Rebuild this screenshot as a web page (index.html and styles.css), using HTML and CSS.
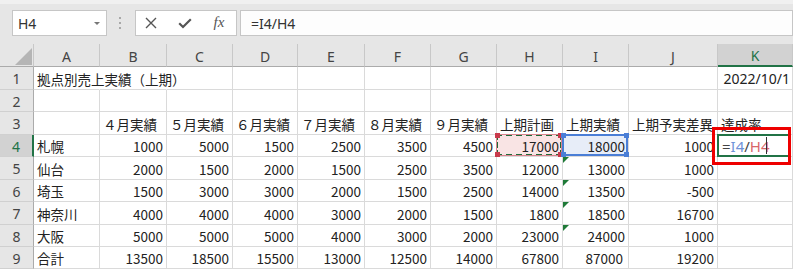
FILE: index.html
```html
<!DOCTYPE html>
<html lang="ja">
<head>
<meta charset="utf-8">
<link rel="stylesheet" href="styles.css">
</head>
<body>
<div class="app">
  <div class="toolbar">
    <div class="namebox"><span>H4</span><span class="arrow"></span></div>
    <div class="grip"><i></i><i></i><i></i></div>
    <div class="fxbtns">
      <span class="btn"><svg width="12" height="12" viewBox="0 0 12 12"><path d="M1 1L11 11M11 1L1 11" stroke="#555" stroke-width="1.4" fill="none"/></svg></span>
      <span class="btn"><svg width="14" height="11" viewBox="0 0 14 11"><path d="M1.2 5.2L5 9L12.8 1.2" stroke="#555" stroke-width="2.2" fill="none"/></svg></span>
      <span class="btn fx">fx</span>
    </div>
    <div class="formula">=I4/H4</div>
  </div>
  <div class="sheet">
    <div class="corner"><span class="tri"></span></div>
    <div class="ch">A</div><div class="ch">B</div><div class="ch">C</div><div class="ch">D</div><div class="ch">E</div><div class="ch">F</div><div class="ch">G</div><div class="ch">H</div><div class="ch">I</div><div class="ch">J</div><div class="ch sel">K</div>

    <div class="rh">1</div>
    <div class="c nb">拠点別売上実績（上期）</div><div class="c nb"></div><div class="c"></div><div class="c"></div><div class="c"></div><div class="c"></div><div class="c"></div><div class="c"></div><div class="c"></div><div class="c"></div><div class="c n date">2022/10/1</div>

    <div class="rh">2</div>
    <div class="c"></div><div class="c"></div><div class="c"></div><div class="c"></div><div class="c"></div><div class="c"></div><div class="c"></div><div class="c"></div><div class="c"></div><div class="c"></div><div class="c"></div>

    <div class="rh">3</div>
    <div class="c"></div><div class="c">４月実績</div><div class="c">５月実績</div><div class="c">６月実績</div><div class="c">７月実績</div><div class="c">８月実績</div><div class="c">９月実績</div><div class="c">上期計画</div><div class="c">上期実績</div><div class="c">上期予実差異</div><div class="c">達成率</div>

    <div class="rh sel">4</div>
    <div class="c">札幌</div><div class="c n">1000</div><div class="c n">5000</div><div class="c n">1500</div><div class="c n">2500</div><div class="c n">3500</div><div class="c n">4500</div><div class="c n refh"><span class="mark-h"><i class="q tl"></i><i class="q tr"></i><i class="q bl"></i><i class="q br"></i></span>17000</div><div class="c n refi"><span class="mark-i"><i class="q tl"></i><i class="q tr"></i><i class="q bl"></i><i class="q br"></i></span>18000</div><div class="c n">1000</div><div class="c active"><span class="fml"><span>=</span><span class="ci">I4</span><span>/</span><span class="chh">H4</span></span><span class="caret"></span></div>

    <div class="rh">5</div>
    <div class="c">仙台</div><div class="c n">2000</div><div class="c n">1500</div><div class="c n">2000</div><div class="c n">1500</div><div class="c n">2500</div><div class="c n">3500</div><div class="c n">12000</div><div class="c n err">13000</div><div class="c n">1000</div><div class="c"></div>

    <div class="rh">6</div>
    <div class="c">埼玉</div><div class="c n">1500</div><div class="c n">3000</div><div class="c n">3000</div><div class="c n">2000</div><div class="c n">1500</div><div class="c n">2500</div><div class="c n">14000</div><div class="c n err">13500</div><div class="c n">-500</div><div class="c"></div>

    <div class="rh">7</div>
    <div class="c">神奈川</div><div class="c n">4000</div><div class="c n">4000</div><div class="c n">4000</div><div class="c n">3000</div><div class="c n">2000</div><div class="c n">1500</div><div class="c n">1800</div><div class="c n err">18500</div><div class="c n">16700</div><div class="c"></div>

    <div class="rh">8</div>
    <div class="c">大阪</div><div class="c n">5000</div><div class="c n">5000</div><div class="c n">5000</div><div class="c n">4000</div><div class="c n">3000</div><div class="c n">2000</div><div class="c n">23000</div><div class="c n err">24000</div><div class="c n">1000</div><div class="c"></div>

    <div class="rh">9</div>
    <div class="c">合計</div><div class="c n">13500</div><div class="c n">18500</div><div class="c n">15500</div><div class="c n">13000</div><div class="c n">12500</div><div class="c n">14000</div><div class="c n">67800</div><div class="c n pad">87000</div><div class="c n">19200</div><div class="c"></div>

    <div class="callout"></div>
  </div>
</div>
</body>
</html>
```
FILE: styles.css
```css
* { box-sizing: border-box; margin: 0; padding: 0; }
body {
  width: 800px;
  height: 276px;
  background: #fff;
  overflow: hidden;
  font-family: "Noto Sans CJK JP", "Noto Sans", sans-serif;
}
.app {
  width: 793px;
  height: 269px;
  display: flex;
  flex-direction: column;
}
.toolbar {
  height: 44px;
  background: #e6e6e6;
  border-top: 4px solid #f0f0f0;
  display: flex;
  align-items: flex-start;
  padding: 6px 0 0 12px;
}
.namebox {
  width: 95px;
  height: 26px;
  background: #fff;
  border: 1px solid #c6c6c6;
  display: flex;
  align-items: center;
  justify-content: space-between;
  padding: 0 6px 0 5px;
  font-family: "Noto Sans", sans-serif;
  font-size: 14px;
  color: #333;
}
.arrow {
  width: 0;
  height: 0;
  border-left: 3px solid transparent;
  border-right: 3px solid transparent;
  border-top: 3px solid #777;
}
.grip {
  width: 2px;
  margin: 7px 14px 0 12px;
  display: flex;
  flex-direction: column;
  gap: 3px;
}
.grip i { display: block; width: 2px; height: 2px; background: #a8a8a8; }
.fxbtns {
  width: 102px;
  height: 26px;
  background: #fff;
  border: 1px solid #c6c6c6;
  display: flex;
  align-items: center;
  gap: 14px;
  padding-left: 5px;
}
.btn {
  width: 20px;
  height: 20px;
  display: flex;
  align-items: center;
  justify-content: center;
}
.fx {
  font-family: "Liberation Serif", serif;
  font-style: italic;
  font-size: 15px;
  color: #555;
  padding-bottom: 2px;
}
.formula {
  flex: 1;
  margin-left: 3px;
  height: 26px;
  background: #fdfdfd;
  border: 1px solid #c6c6c6;
  display: flex;
  align-items: center;
  padding-left: 10px;
  font-family: "Noto Sans", sans-serif;
  font-size: 14px;
  color: #333;
}
.sheet {
  position: relative;
  display: grid;
  grid-template-columns: 34px 66px 67px 66px 65px 67px 66px 66px 66px 66px 89px 75px;
  grid-template-rows: 23px 23px 22px 23px 22px 23px 22px 23px 22px 22px;
}
.corner {
  background: #e6e6e6;
  border-right: 1px solid #c8c8c8;
  border-bottom: 1px solid #ababab;
  position: relative;
}
.tri {
  position: absolute;
  right: 1px;
  bottom: 1px;
  width: 17px;
  height: 17px;
  background: #b5b5b5;
  clip-path: polygon(100% 0, 100% 100%, 0 100%);
}
.ch {
  background: #e6e6e6;
  border-right: 1px solid #c8c8c8;
  border-bottom: 1px solid #ababab;
  display: flex;
  align-items: center;
  justify-content: center;
  padding-top: 2px;
  font-family: "Noto Sans", sans-serif;
  font-size: 14px;
  color: #444;
}
.ch.sel {
  background: #d2d2d2;
  color: #217346;
  border-bottom: 2px solid #217346;
}
.rh {
  background: #e6e6e6;
  border-right: 1px solid #ababab;
  border-bottom: 1px solid #d0d0d0;
  display: flex;
  align-items: center;
  justify-content: center;
  padding-top: 1px;
  font-family: "Noto Sans", sans-serif;
  font-size: 14px;
  color: #444;
}
.rh.sel {
  background: #d2d2d2;
  color: #217346;
  border-right: 2px solid #217346;
}
.c {
  position: relative;
  border-right: 1px solid #dadada;
  border-bottom: 1px solid #dadada;
  display: flex;
  align-items: center;
  padding: 1px 3px 0 3px;
  font-size: 13.5px;
  color: #222;
  white-space: nowrap;
  overflow: visible;
}
.c.nb { border-right-color: transparent; }
.c.n { justify-content: flex-end; }
.c.pad { padding-right: 5px; }
.c.date { font-family: "Noto Sans", sans-serif; font-size: 14px; padding-right: 2px; }
.refh { background: #f9e4e4; }
.refi { background: #e7edf8; }
.mark-h, .mark-i {
  position: absolute;
  left: -1px;
  top: -1px;
  right: 0;
  bottom: 0;
}
.mark-h {
  border: 2px dashed #1e6b38;
  outline: 1px solid #d9848e;
  outline-offset: -1px;
}
.mark-i { border: 2px solid #4a7ed6; }
.q {
  position: absolute;
  width: 5px;
  height: 5px;
}
.mark-h .q { background: #c93a4c; }
.mark-i .q { background: #4a7ed6; }
.q.tl { left: -3px; top: -3px; }
.q.tr { right: -3px; top: -3px; }
.q.bl { left: -3px; bottom: -3px; }
.q.br { right: -3px; bottom: -3px; }
.err::before {
  content: "";
  position: absolute;
  left: 0;
  top: 0;
  border-top: 6px solid #1f7a38;
  border-right: 6px solid transparent;
}
.active {
  padding-left: 4px;
  font-family: "Noto Sans", sans-serif;
  font-size: 15px;
  color: #444;
}
.active::after {
  content: "";
  position: absolute;
  left: -1px;
  top: -1px;
  right: 1px;
  bottom: -1px;
  border: 2px solid #217346;
}
.ci { color: #6f93d8; }
.chh { color: #d9676a; }
.caret {
  position: absolute;
  left: 48px;
  top: 2px;
  bottom: 2px;
  width: 1px;
  background: #333;
}
.callout {
  position: absolute;
  left: 712px;
  top: 83px;
  width: 79px;
  height: 38px;
  border: 3px solid #ee0000;
  pointer-events: none;
}
```
